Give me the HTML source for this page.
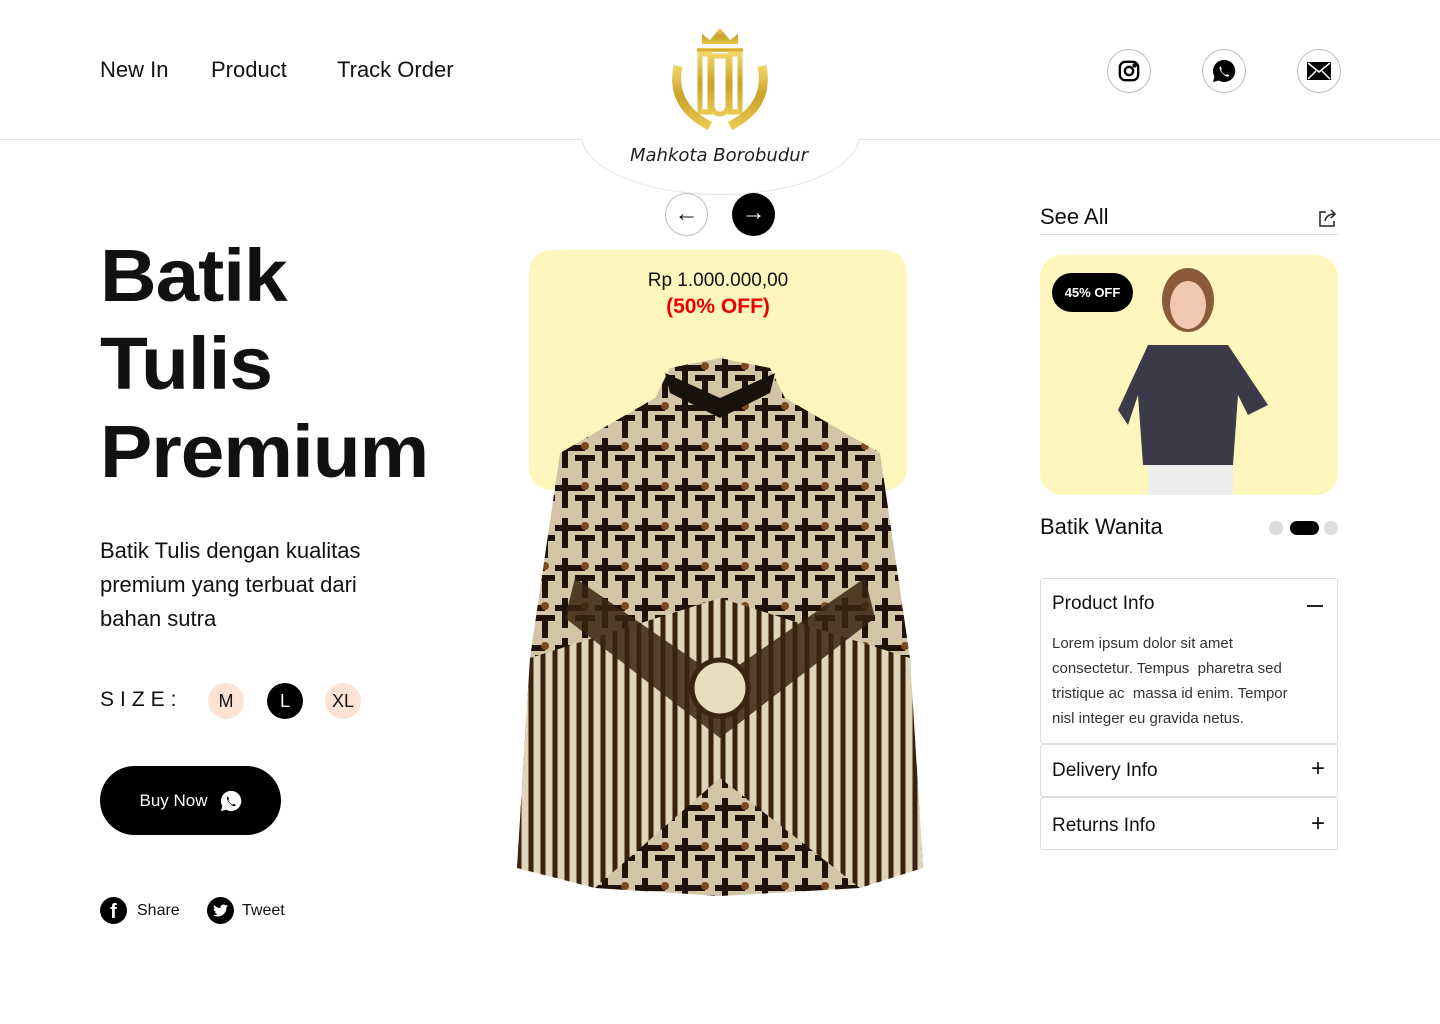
<!DOCTYPE html>
<html><head><meta charset="utf-8"><style>
*{margin:0;padding:0;box-sizing:border-box}
body{width:1440px;height:1024px;background:#fff;font-family:"Liberation Sans",sans-serif;color:#111;position:relative;overflow:hidden}
.a{position:absolute}
.nav{font-size:22px;top:57px}
.circ{position:absolute;width:44px;height:44px;border:1px solid #c8b8b8;border-radius:50%;display:flex;align-items:center;justify-content:center;top:49px}
.sz{position:absolute;top:683px;width:36px;height:36px;border-radius:50%;background:#fde3d3;display:flex;align-items:center;justify-content:center;font-size:18px}
.acc{position:absolute;left:1040px;width:298px;border:1px solid #ddd;border-radius:3px}
.acc h4{font-weight:normal;font-size:19px;position:absolute;left:11px}
</style></head><body>
<div class="a nav" style="left:100px">New In</div>
<div class="a nav" style="left:211px">Product</div>
<div class="a nav" style="left:337px">Track Order</div>
<div class="a" style="left:0;top:139px;width:1440px;height:1px;background:#e3e3e3"></div>
<div class="a" style="left:581px;top:40px;width:279px;height:155px;background:#fff;border:1px solid #e3e3e3;border-top:none;border-radius:0 0 140px 140px/0 0 60px 60px;clip-path:inset(99px 0 0 0)"></div>
<svg class="a" style="left:670px;top:26px" width="100" height="106" viewBox="0 0 100 106">
<defs><linearGradient id="g" x1="0" x2="0" y1="0" y2="1"><stop offset="0" stop-color="#f0d66a"/><stop offset=".5" stop-color="#c9a227"/><stop offset="1" stop-color="#e8c84e"/></linearGradient></defs>
<path d="M32 18 L32 8 L40 14 L50 2 L60 14 L68 8 L68 18 Z" fill="url(#g)"/>
<rect x="27" y="22" width="46" height="4" fill="url(#g)"/>
<path d="M30 28 h10 v58 h-10z M60 28 h10 v58 h-10z M42 30 h16 v50 a8 8 0 0 1 -16 0z" fill="none" stroke="url(#g)" stroke-width="5"/>
<path d="M8 40 Q0 80 40 100 M92 40 Q100 80 60 100" fill="none" stroke="url(#g)" stroke-width="9"/>
</svg>
<div class="a" style="left:630px;top:145px;font-family:'DejaVu Sans',sans-serif;font-style:italic;font-size:18px;color:#222">Mahkota Borobudur</div>
<div class="a" style="left:665px;top:193px;width:43px;height:43px;border:1px solid #c8b8b8;border-radius:50%;text-align:center;line-height:40px;font-size:24px">←</div>
<div class="a" style="left:732px;top:193px;width:43px;height:43px;background:#000;color:#fff;border-radius:50%;text-align:center;line-height:40px;font-size:24px">→</div>
<div class="circ" style="left:1107px"><svg width="22" height="22" viewBox="0 0 24 24" fill="none" stroke="#000" stroke-width="2.6"><rect x="2" y="2" width="20" height="20" rx="6"/><circle cx="12" cy="12" r="4.5"/><circle cx="18" cy="6" r="1" fill="#000"/></svg></div>
<div class="circ" style="left:1202px"><svg width="24" height="24" viewBox="0 0 24 24"><path d="M12 1a11 11 0 0 0-9.5 16.5L1 23l5.7-1.5A11 11 0 1 0 12 1z" fill="#000"/><path d="M8 7c1 0 2 3 1.5 3.5S9 12 11 14s3 2 3.5 1.5S18 16 17 17s-3 1-6-2-4-5-3-8z" fill="#fff"/></svg></div>
<div class="circ" style="left:1297px"><svg width="24" height="18" viewBox="0 0 24 18"><rect width="24" height="18" fill="#000"/><path d="M1 1l11 9 11-9M1 17l8-8M23 17l-8-8" stroke="#fff" stroke-width="1.5" fill="none"/></svg></div>

<div class="a" style="left:100px;top:232px;font-size:74px;font-weight:900;line-height:88px;letter-spacing:-1px;transform:scaleX(1.06);transform-origin:left top">Batik<br>Tulis<br>Premium</div>
<div class="a" style="left:100px;top:534px;font-size:22px;line-height:34px">Batik Tulis dengan kualitas<br>premium yang terbuat dari<br>bahan sutra</div>
<div class="a" style="left:100px;top:688px;font-size:21px;letter-spacing:6px">SIZE:</div>
<div class="sz" style="left:208px">M</div>
<div class="sz" style="left:267px;background:#000;color:#fff">L</div>
<div class="sz" style="left:325px">XL</div>
<div class="a" style="left:100px;top:766px;width:181px;height:69px;background:#000;border-radius:35px;color:#fff;font-size:17px;display:flex;align-items:center;justify-content:center;gap:12px">Buy Now <svg width="22" height="22" viewBox="0 0 24 24"><path d="M12 1a11 11 0 0 0-9.5 16.5L1 23l5.7-1.5A11 11 0 1 0 12 1z" fill="#fff"/><path d="M8 7c1 0 2 3 1.5 3.5S9 12 11 14s3 2 3.5 1.5S18 16 17 17s-3 1-6-2-4-5-3-8z" fill="#000"/></svg></div>
<div class="a" style="left:100px;top:897px;width:27px;height:27px;border-radius:50%;background:#000;color:#fff;font-weight:bold;text-align:center;line-height:30px;font-size:20px">f</div>
<div class="a" style="left:137px;top:902px;font-size:16px">Share</div>
<div class="a" style="left:207px;top:897px;width:27px;height:27px;border-radius:50%;background:#000"></div>
<svg class="a" style="left:213px;top:904px" width="15" height="13" viewBox="0 0 24 20"><path d="M24 2.5a10 10 0 0 1-2.8.8A5 5 0 0 0 23.3.6a10 10 0 0 1-3.1 1.2A5 5 0 0 0 11.8 6 14 14 0 0 1 1.7.9a5 5 0 0 0 1.5 6.6A5 5 0 0 1 1 6.9a5 5 0 0 0 4 4.9 5 5 0 0 1-2.2.1 5 5 0 0 0 4.6 3.4A10 10 0 0 1 0 17.3 14 14 0 0 0 7.5 19.5c9 0 14-7.5 14-14v-.6A10 10 0 0 0 24 2.5z" fill="#fff"/></svg>
<div class="a" style="left:242px;top:902px;font-size:16px">Tweet</div>

<div class="a" style="left:529px;top:250px;width:378px;height:240px;background:#fff6bd;border-radius:22px"></div>
<div class="a" style="left:529px;top:270px;width:378px;text-align:center;font-size:19px">Rp 1.000.000,00</div>
<div class="a" style="left:529px;top:295px;width:378px;text-align:center;font-size:21px;font-weight:bold;color:#e00">(50% OFF)</div>
<svg class="a" style="left:515px;top:358px" width="410" height="540" viewBox="0 0 410 540">
<defs><pattern id="p" width="40" height="40" patternUnits="userSpaceOnUse"><rect width="40" height="40" fill="#d2c4a4"/><path d="M0 10h30M10 0v30M20 20h20M30 20v20" stroke="#1e120a" stroke-width="6"/><circle cx="30" cy="8" r="4" fill="#7a4a20"/></pattern>
<pattern id="q" width="12" height="60" patternUnits="userSpaceOnUse"><rect width="12" height="60" fill="#e0d5ba"/><path d="M4 0v60" stroke="#3a200e" stroke-width="5"/></pattern></defs>
<path d="M155 10 L205 0 L255 10 L270 40 L365 95 L395 300 L408 510 L370 515 L350 350 L345 530 L205 538 L80 530 L72 350 L55 515 L2 510 L15 300 L45 95 L140 40Z" fill="url(#p)"/>
<path d="M15 300 L205 240 L395 300 L408 510 L345 530 L205 420 L80 530 L2 510Z" fill="url(#q)"/>
<path d="M60 220 L205 320 L350 220 L360 260 L205 380 L50 260Z" fill="#3a2412" opacity=".85"/>
<circle cx="205" cy="330" r="28" fill="#e7dcbf" stroke="#3a2412" stroke-width="5"/>
<path d="M150 15 L205 40 L260 15 L255 35 L205 60 L155 35Z" fill="#1a100a"/>
</svg>

<div class="a" style="left:1040px;top:204px;font-size:22px">See All</div>
<svg class="a" style="left:1318px;top:208px" width="20" height="20" viewBox="0 0 20 20" fill="none" stroke="#222" stroke-width="1.5"><path d="M8 4H2v14h14v-5"/><path d="M7 13c1-5 5-7 10-7M13 2l4 4-4 4"/></svg>
<div class="a" style="left:1040px;top:234px;width:298px;height:1px;background:#ddd"></div>
<div class="a" style="left:1040px;top:255px;width:298px;height:240px;background:#fff6bd;border-radius:22px;overflow:hidden">
<svg class="a" style="left:78px;top:10px" width="155" height="230" viewBox="0 0 155 230"><ellipse cx="70" cy="35" rx="26" ry="32" fill="#8a5a3a"/><ellipse cx="70" cy="40" rx="18" ry="24" fill="#f0c8b0"/><path d="M30 80 L110 80 L150 140 L130 150 L120 130 L115 200 L25 200 L20 130 L10 160 L0 145Z" fill="#3a3a48"/><path d="M30 200 H115 V230 H30Z" fill="#eee"/></svg>
<div class="a" style="left:12px;top:18px;width:81px;height:39px;background:#000;color:#fff;border-radius:20px;font-size:13px;font-weight:bold;text-align:center;line-height:39px">45% OFF</div>
</div>
<div class="a" style="left:1040px;top:514px;font-size:22px">Batik Wanita</div>
<div class="a" style="left:1269px;top:521px;width:14px;height:14px;border-radius:50%;background:#ddd"></div>
<div class="a" style="left:1290px;top:521px;width:29px;height:14px;border-radius:7px;background:#000"></div>
<div class="a" style="left:1324px;top:521px;width:14px;height:14px;border-radius:50%;background:#ddd"></div>

<div class="acc" style="top:578px;height:166px"><h4 style="top:14px">Product Info</h4><div class="a" style="right:14px;top:26px;width:16px;height:1.5px;background:#222"></div>
<div class="a" style="left:11px;top:52px;font-size:15px;line-height:25px;color:#333">Lorem ipsum dolor sit amet<br>consectetur. Tempus &nbsp;pharetra sed<br>tristique ac &nbsp;massa id enim. Tempor<br>nisl integer eu gravida netus.</div></div>
<div class="acc" style="top:744px;height:53px"><h4 style="top:15px">Delivery Info</h4><div class="a" style="right:12px;top:10px;font-size:24px;font-weight:200">+</div></div>
<div class="acc" style="top:797px;height:53px"><h4 style="top:17px">Returns Info</h4><div class="a" style="right:12px;top:12px;font-size:24px;font-weight:200">+</div></div>
</body></html>
